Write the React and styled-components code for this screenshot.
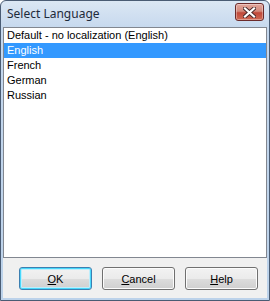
import React, { useState } from "react";
import styled, { createGlobalStyle } from "styled-components";

const GlobalStyle = createGlobalStyle`
  html, body {
    margin: 0;
    padding: 0;
    background: #ffffff;
  }
`;

const Window = styled.div`
  box-sizing: border-box;
  width: 270px;
  height: 301px;
  display: flex;
  flex-direction: column;
  border: 1px solid #4a5c74;
  border-radius: 6px 6px 0 0;
  padding: 0 2px 2px 2px;
  background: linear-gradient(to bottom, #dbe7f4 0px, #c4d7ed 30px, #bcd2ea 100%);
  overflow: hidden;
`;

const TitleBar = styled.div`
  height: 26px;
  flex: none;
  display: flex;
  align-items: center;
  justify-content: space-between;
  padding: 0 3px 0 4px;
`;

const Title = styled.span`
  font-family: "Noto Sans", "Open Sans", sans-serif;
  font-size: 12px;
  color: #1e2a3a;
  margin-top: -1px;
`;

const CloseButton = styled.div`
  width: 29px;
  height: 18px;
  margin-top: -4px;
  box-sizing: border-box;
  border: 1px solid #6b2a2a;
  border-radius: 3px;
  display: flex;
  align-items: center;
  justify-content: center;
  background: linear-gradient(to bottom, #e3a69c 0%, #d38a7c 45%, #c0493a 55%, #cf6a55 100%);
  box-shadow: inset 0 0 0 1px rgba(255, 255, 255, 0.35);
`;

const Client = styled.div`
  flex: 1;
  display: flex;
  flex-direction: column;
  background: #f0f0f0;
`;

const ListBox = styled.div`
  height: 231px;
  box-sizing: border-box;
  border: 1px solid #828790;
  background: #ffffff;
  padding-top: 0px;
`;

const ListItem = styled.div`
  height: 15px;
  line-height: 15px;
  padding-left: 3px;
  font-family: "Liberation Sans", Arial, sans-serif;
  font-size: 11px;
  color: ${({ selected }) => (selected ? "#ffffff" : "#000000")};
  background: ${({ selected }) => (selected ? "#3399ff" : "transparent")};
  cursor: default;
`;

const ButtonRow = styled.div`
  display: flex;
  gap: 10px;
  padding: 9px 0 0 16px;
`;

const Button = styled.div`
  box-sizing: border-box;
  width: 73px;
  height: 23px;
  display: flex;
  align-items: center;
  justify-content: center;
  border: 1px solid ${({ primary }) => (primary ? "#3c7fb1" : "#707070")};
  border-radius: 3px;
  font-family: "Liberation Sans", Arial, sans-serif;
  font-size: 11px;
  color: #000000;
  background: linear-gradient(
    to bottom,
    #f2f2f2 0%,
    #ebebeb 50%,
    #dddddd 51%,
    #cfcfcf 100%
  );
  box-shadow: ${({ primary }) =>
    primary
      ? "inset 0 0 0 1px #48d8fb, inset 0 0 0 2px #bfeefc"
      : "inset 0 0 0 1px #fcfcfc"};

  u {
    text-decoration: underline;
    text-underline-offset: 1px;
  }
`;

const languages = [
  "Default - no localization (English)",
  "English",
  "French",
  "German",
  "Russian",
];

export default function App() {
  const [selected, setSelected] = useState(1);

  return (
    <>
      <GlobalStyle />
      <Window>
        <TitleBar>
          <Title>Select Language</Title>
          <CloseButton>
            <svg width="13" height="11" viewBox="0 0 13 11">
              <path
                d="M2 1.5 L11 9.5 M11 1.5 L2 9.5"
                stroke="#4a2a2a"
                strokeWidth="4"
                strokeLinecap="square"
              />
              <path
                d="M2 1.5 L11 9.5 M11 1.5 L2 9.5"
                stroke="#ffffff"
                strokeWidth="2.2"
                strokeLinecap="square"
              />
            </svg>
          </CloseButton>
        </TitleBar>
        <Client>
          <ListBox>
            {languages.map((lang, i) => (
              <ListItem
                key={lang}
                selected={i === selected}
                onClick={() => setSelected(i)}
              >
                {lang}
              </ListItem>
            ))}
          </ListBox>
          <ButtonRow>
            <Button primary>
              <span>
                <u>O</u>K
              </span>
            </Button>
            <Button>
              <span>
                <u>C</u>ancel
              </span>
            </Button>
            <Button>
              <span>
                <u>H</u>elp
              </span>
            </Button>
          </ButtonRow>
        </Client>
      </Window>
    </>
  );
}
